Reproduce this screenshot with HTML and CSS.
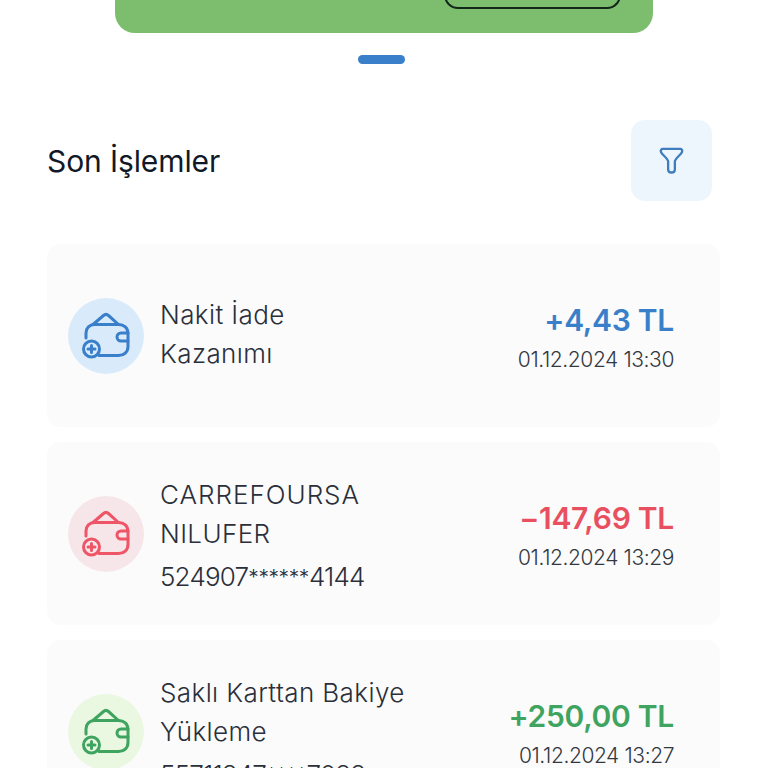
FILE: index.html
```html
<!DOCTYPE html>
<html lang="tr">
<head>
<meta charset="utf-8">
<title>Son İşlemler</title>
<link rel="stylesheet" href="styles.css">
</head>
<body>
<svg class="defs" width="0" height="0" aria-hidden="true">
  <symbol id="wallet" viewBox="0 0 48 48" fill="none" stroke="currentColor" stroke-width="3" stroke-linecap="round" stroke-linejoin="round">
    <path d="M4 26v-5c0-5 3.500-8.500 8.500-8.500h24c5.500 0 9.500 3.500 9.500 9v13c0 5.500-4 9-9.500 9H17"/>
    <path d="M11 12.500L21.500 3.500c1.500-1.300 3.500-1.300 5 0L36.500 12.500"/>
    <path d="M46 21h-7c-2.200 0-4 1.800-4 4s1.800 4 4 4h7"/>
    <circle cx="9.500" cy="37" r="8"/>
    <path d="M9.500 33.500v7M6 37h7"/>
  </symbol>
</svg>
<main class="page">
  <div class="banner"><div class="banner-btn"></div></div>
  <div class="pager"><span class="pager-dot"></span></div>
  <header class="head">
    <h1 class="title">Son İşlemler</h1>
    <button class="filter" aria-label="Filtre">
      <svg class="filter-icon" viewBox="0 0 26 28" fill="none" stroke="currentColor" stroke-width="2.4" stroke-linejoin="round">
        <path d="M4 2h18c1.800 0 2.500 1.500 2 3-1 3-6.500 6-7.500 9.500V23c0 2-1.500 3.500-3.500 3.500S9.500 25 9.500 23v-8.500C8.500 11 3 8 2 5c-.5-1.500.2-3 2-3z"/>
      </svg>
    </button>
  </header>
  <section class="list">
    <article class="card card-blue">
      <div class="badge"><svg class="wallet"><use href="#wallet"/></svg></div>
      <div class="info"><div class="name">Nakit İade<br>Kazanımı</div></div>
      <div class="side"><div class="amount">+4,43 TL</div><div class="date">01.12.2024 13:30</div></div>
    </article>
    <article class="card card-red">
      <div class="badge"><svg class="wallet"><use href="#wallet"/></svg></div>
      <div class="info"><div class="name"><span class="wide">CARREFOURSA</span><br>NILUFER</div><div class="pan">524907<span class="mask">******</span>4144</div></div>
      <div class="side"><div class="amount">−147,69 TL</div><div class="date">01.12.2024 13:29</div></div>
    </article>
    <article class="card card-green">
      <div class="badge"><svg class="wallet"><use href="#wallet"/></svg></div>
      <div class="info"><div class="name">Saklı Karttan Bakiye<br>Yükleme</div><div class="pan">55711347<span class="mask">****</span>7033</div></div>
      <div class="side"><div class="amount">+250,00 TL</div><div class="date">01.12.2024 13:27</div></div>
    </article>
  </section>
</main>
</body>
</html>
```
FILE: styles.css
```css
* { box-sizing: border-box; }
html, body { margin: 0; padding: 0; background: #fff; }
body { height: 768px; overflow: hidden; font-family: "Inter", "Liberation Sans", sans-serif; }
.defs { position: absolute; }
.page { display: flex; flex-direction: column; height: 768px; overflow: hidden; }
.banner { flex: none; position: relative; height: 33px; margin: 0 115px; background: #7cbd6e; border-radius: 0 0 20px 20px; }
.banner-btn { position: absolute; left: 329px; bottom: 24px; width: 177px; height: 30px; border: 2px solid #12261a; border-radius: 0 0 14px 14px; border-top: 0; }
.pager { flex: none; display: flex; justify-content: center; margin-top: 22px; height: 9px; padding-right: 5px; }
.pager-dot { width: 47px; height: 9px; border-radius: 5px; background: #3a7fc9; }
.head { flex: none; display: flex; align-items: center; justify-content: space-between; margin-top: 56px; height: 81px; padding: 0 56px 0 47px; }
.title { margin: 0; padding-top: 1px; font-size: 30px; font-weight: 400; color: #111827; letter-spacing: -0.1px; }
.filter { width: 81px; height: 81px; padding: 0; border: 0; border-radius: 14px; background: #eef6fd; color: #3f7dbf; display: flex; align-items: center; justify-content: center; }
.filter-icon { width: 25px; height: 27px; }
.list { flex: none; display: flex; flex-direction: column; gap: 15px; margin: 43px 48px 0 47px; }
.card { flex: none; height: 183px; display: flex; align-items: center; padding: 0 46px 0 21px; background: #fbfbfb; border-radius: 14px; }
.badge { flex: none; width: 76px; height: 76px; border-radius: 50%; display: flex; align-items: center; justify-content: center; }
.wallet { width: 48px; height: 48px; margin: 1px 0 0 -1px; }
.info { flex: 1; min-width: 0; margin: -4px 0 0 16px; color: #2a2f3a; font-weight: 300; font-size: 26px; letter-spacing: 0.4px; }
.name { line-height: 39px; }
.wide { letter-spacing: 1px; }
.pan { line-height: 39px; margin: 4px 0 -8px; letter-spacing: -0.8px; }
.mask { font-size: 21px; letter-spacing: -0.4px; vertical-align: 1px; }
.side { flex: none; margin-top: 4px; text-align: right; }
.amount { font-size: 30px; line-height: 38px; font-weight: 600; letter-spacing: -0.3px; }
.date { margin-top: 7px; font-size: 21px; line-height: 28px; font-weight: 300; color: #33383f; letter-spacing: -0.4px; }
.card-blue .badge { background: #d9ebfa; color: #3a7fc9; }
.card-blue .amount { color: #3a7fc9; }
.card-red .badge { background: #f7e6e9; color: #ee5567; }
.card-red .amount { color: #e9505f; }
.card-green .badge { background: #eaf8e2; color: #3fa45f; }
.card-green .amount { color: #3fa45f; }
```
